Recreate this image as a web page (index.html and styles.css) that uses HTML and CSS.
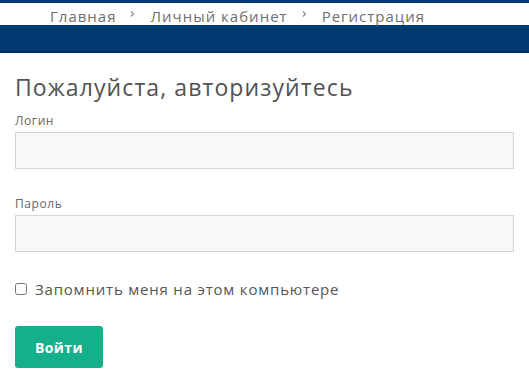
FILE: index.html
```html
<!DOCTYPE html>
<html lang="ru">
<head>
    <meta charset="UTF-8">
    <meta name="viewport" content="width=device-width, initial-scale=1.0">
    <title>Авторизация</title>
    <link rel="stylesheet" href="styles.css">
</head>
<body>
    <div class="top-line"></div>
    <nav class="breadcrumbs">
        <a href="#">Главная</a>
        <svg class="sep" width="5" height="6" viewBox="0 0 5 6"><path d="M1 0.5 L3.5 3 L1 5.5" fill="none" stroke="#8a8a8a" stroke-width="1.2"/></svg>
        <a href="#">Личный кабинет</a>
        <svg class="sep" width="5" height="6" viewBox="0 0 5 6"><path d="M1 0.5 L3.5 3 L1 5.5" fill="none" stroke="#8a8a8a" stroke-width="1.2"/></svg>
        <span class="current">Регистрация</span>
    </nav>
    <div class="band"></div>

    <main class="auth">
        <h1>Пожалуйста, авторизуйтесь</h1>
        <form class="auth-form">
            <label class="field">
                <span class="field-label">Логин</span>
                <input type="text" name="login">
            </label>
            <label class="field">
                <span class="field-label">Пароль</span>
                <input type="password" name="password">
            </label>
            <label class="remember">
                <input type="checkbox" name="remember">
                <span>Запомнить меня на этом компьютере</span>
            </label>
            <button type="submit" class="submit-btn">Войти</button>
        </form>
    </main>
</body>
</html>
```

FILE: styles.css
```css
body {
    margin: 0;
    font-family: "Open Sans", "DejaVu Sans", sans-serif;
    background: #fff;
    color: #555;
}

.top-line {
    height: 3px;
    background: #003a70;  /* brand blue */
}

.breadcrumbs {
    display: flex;
    align-items: flex-start;
    gap: 15px;
    height: 18px;
    padding: 4px 0 0 50px;
    font-size: 15px;
    line-height: 18px;
    letter-spacing: 1px;
}

.breadcrumbs a,
.breadcrumbs .current {
    color: #6f6f6f;
    text-decoration: none;
}

.breadcrumbs .sep {
    margin-top: 4px;
    margin-left: -1px;
}

.band {
    height: 26px;
    background: #003a70;
    border-bottom: 2px solid #00305e;
}

.auth {
    padding: 0 15px;
}

.auth h1 {
    margin: 20px 0 12px;
    font-size: 23px;
    font-weight: 400;
    line-height: 28px;
    letter-spacing: 1.1px;
    color: #525252;
}

.auth-form {
    display: flex;
    flex-direction: column;
    align-items: flex-start;
}

.field {
    display: flex;
    flex-direction: column;
    width: 100%;
    margin-bottom: 27px;
}

.field-label {
    font-size: 12px;
    line-height: 16px;
    letter-spacing: 0.6px;
    color: #666;
    margin-bottom: 3px;
}

.field input {
    box-sizing: border-box;
    width: 100%;
    height: 37px;
    border: 1px solid #d5d5d5;
    background: #f7f8fa;
    font: inherit;
    padding: 0 10px;
}

.remember {
    display: flex;
    align-items: center;
    gap: 8px;
    font-size: 15px;
    letter-spacing: 0.8px;
    color: #555;
}

.remember input {
    margin: 0;
    width: 12px;
    height: 12px;
}

.submit-btn {
    margin-top: 27px;
    width: 88px;
    height: 42px;
    border: 0;
    border-radius: 3px;
    background: #15b08a;  /* green action */
    color: #fff;
    font-family: inherit;
    font-size: 14px;
    font-weight: 700;
    letter-spacing: 0.4px;
    cursor: pointer;
}
```
